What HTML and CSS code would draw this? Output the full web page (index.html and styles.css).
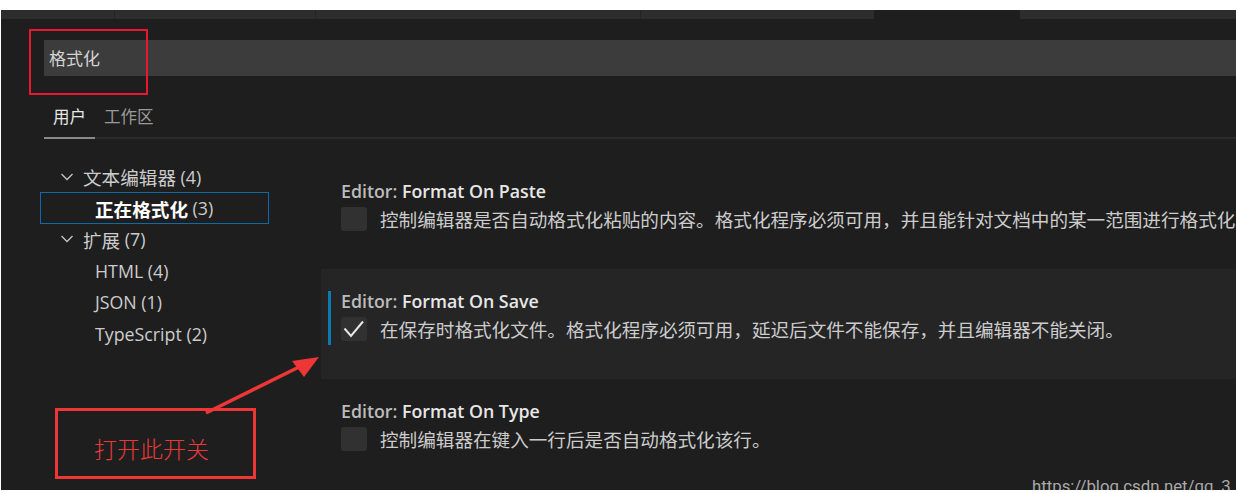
FILE: index.html
```html
<!DOCTYPE html>
<html lang="zh-CN">
<head>
<meta charset="utf-8">
<title>设置</title>
<link rel="stylesheet" href="styles.css">
</head>
<body>
<div class="frame">
  <div class="tabstrip">
    <span class="t t1"></span><span class="t t2"></span><span class="t t3"></span><span class="t t4"></span><span class="t t5"></span><span class="t t6"></span>
  </div>
  <div class="search">格式化</div>
  <div class="tabs">
    <span class="tab active">用户</span>
    <span class="tab">工作区</span>
  </div>
  <div class="content">
    <div class="tree">
      <div class="row l1"><svg class="chev" viewBox="0 0 14 8"><polyline points="1.5,1 7,6.5 12.5,1" fill="none" stroke="#c5c5c5" stroke-width="1.3"/></svg><span class="zh">文本编辑器</span>&nbsp;(4)</div>
      <div class="row l2 sel"><span class="zh">正在格式化</span>&nbsp;(3)</div>
      <div class="row l1"><svg class="chev" viewBox="0 0 14 8"><polyline points="1.5,1 7,6.5 12.5,1" fill="none" stroke="#c5c5c5" stroke-width="1.3"/></svg><span class="zh">扩展</span>&nbsp;(7)</div>
      <div class="row l2">HTML (4)</div>
      <div class="row l2">JSON (1)</div>
      <div class="row l2">TypeScript (2)</div>
    </div>
    <div class="settings">
      <div class="setting">
        <div class="title"><span class="cat">Editor: </span>Format On Paste</div>
        <div class="desc-row"><span class="cb"></span><span class="desc">控制编辑器是否自动格式化粘贴的内容。格式化程序必须可用，并且能针对文档中的某一范围进行格式化。</span></div>
      </div>
      <div class="setting focused">
        <div class="title"><span class="cat">Editor: </span>Format On Save</div>
        <div class="desc-row"><span class="cb"><svg viewBox="0 0 26 24" width="26" height="24"><polyline points="3.5,11.5 10,19 22,4.5" fill="none" stroke="#e6e6e6" stroke-width="2"/></svg></span><span class="desc">在保存时格式化文件。格式化程序必须可用，延迟后文件不能保存，并且编辑器不能关闭。</span></div>
      </div>
      <div class="setting">
        <div class="title"><span class="cat">Editor: </span>Format On Type</div>
        <div class="desc-row"><span class="cb"></span><span class="desc">控制编辑器在键入一行后是否自动格式化该行。</span></div>
      </div>
    </div>
  </div>
  <div class="watermark">https://blog.csdn.net/qq_3</div>
  <div class="mark mark-search"></div>
  <div class="mark mark-note">打开此开关</div>
  <svg class="arrow" viewBox="0 0 1236 493" width="1236" height="493">
    <line x1="206" y1="413" x2="299" y2="367" stroke="#ee3636" stroke-width="3.5"/>
    <polygon points="319,357 292,361 304,377" fill="#ee3636"/>
  </svg>
</div>
</body>
</html>
```

FILE: styles.css
```css
* { box-sizing: border-box; }

body {
  margin: 0;
  background: #ffffff;
  font-family: "Open Sans", "Noto Sans CJK SC", sans-serif;
}

.frame {
  position: relative;
  margin: 10px 0 0 1px;
  width: 1235px;
  height: 480px;
  background: #1e1e1e;
  overflow: hidden;
}

/* top editor tab strip */
.tabstrip {
  display: flex;
  height: 9px;
  background: #2d2d2d;
}
.t { height: 9px; flex: none; }
.t1 { width: 114px; border-right: 1px solid #232323; }
.t2 { width: 201px; border-right: 1px solid #232323; }
.t3 { width: 325px; border-right: 1px solid #232323; }
.t4 { width: 233px; }
.t5 { width: 146px; background: #1e1e1e; }
.t6 { flex: 1; }

/* search box */
.search {
  margin: 21px 0 0 43px;
  height: 36px;
  background: #3c3c3c;
  padding-left: 5px;
  font-family: "Noto Sans CJK SC", sans-serif;
  font-size: 17px;
  line-height: 36px;
  color: #d4d4d4;
}

/* user / workspace tabs */
.tabs {
  display: flex;
  margin-left: 43px;
  padding-top: 28px;
  height: 63px;
  border-bottom: 2px solid #2b2b2b;
}
.tab {
  height: 35px;
  padding: 0 9px;
  font-family: "Noto Sans CJK SC", sans-serif;
  font-size: 16.5px;
  line-height: 24px;
  color: #9a9a9a;
}
.tab.active {
  color: #e7e7e7;
  border-bottom: 2px solid #8a8a8a;
}

.content {
  display: flex;
}

/* table of contents tree */
.tree {
  flex: none;
  width: 229px;
  margin: 22px 0 0 39px;
}
.row {
  display: flex;
  align-items: center;
  height: 31.4px;
  border: 1px solid transparent;
  white-space: nowrap;
  font-size: 17.8px;
  color: #cccccc;
}
.row.l1 { padding-left: 19px; }
.row.l2 { padding-left: 54px; }
.row.sel { border-color: #0f6aa6; }
.zh {
  font-family: "Noto Sans CJK SC", sans-serif;
  font-size: 18.6px;
}
.sel .zh { font-weight: 700; color: #ffffff; }
.chev {
  flex: none;
  width: 14px;
  height: 8px;
  margin-right: 9px;
}

/* settings list */
.settings {
  flex: 1;
  min-width: 0;
  margin: 20px 0 0 52px;
}
.setting {
  position: relative;
  height: 110px;
  padding: 20px 0 0 20px;
  white-space: nowrap;
}
.setting.focused { background: #252526; }
.setting.focused::before {
  content: "";
  position: absolute;
  left: 7px;
  top: 22px;
  width: 3px;
  height: 54px;
  background: #0e7bb0;
}
.title {
  font-size: 17.8px;
  line-height: 24px;
  font-weight: 600;
  color: #e7e7e7;
}
.cat { color: #bbbbbb; }
.desc-row {
  display: flex;
  align-items: center;
  height: 24px;
  margin-top: 4px;
}
.cb {
  flex: none;
  width: 26px;
  height: 24px;
  border-radius: 3px;
  background: #313131;
}
.cb svg { display: block; }
.desc {
  margin-left: 13px;
  font-family: "Noto Sans CJK SC", sans-serif;
  font-size: 18.6px;
  line-height: 24px;
  color: #cccccc;
}

/* watermark and annotations (overlays) */
.watermark {
  position: absolute;
  left: 1031px;
  top: 466px;
  font-family: Roboto, sans-serif;
  font-size: 16.8px;
  line-height: 20px;
  color: #a9a9a9;
  white-space: nowrap;
}
.mark {
  position: absolute;
}
.mark-search {
  left: 28px;
  top: 19px;
  width: 119px;
  height: 66px;
  border: 2px solid #e8192c;
}
.mark-note {
  left: 54px;
  top: 398px;
  width: 201px;
  height: 71px;
  border: 3px solid #ee3636;
  display: flex;
  align-items: center;
  justify-content: center;
  padding: 9px 8px 0 0;
  font-family: "Noto Sans CJK SC", sans-serif;
  font-weight: 300;
  font-size: 23px;
  color: #e83a3a;
}
.arrow {
  position: absolute;
  left: -1px;
  top: -10px;
  pointer-events: none;
}
```
